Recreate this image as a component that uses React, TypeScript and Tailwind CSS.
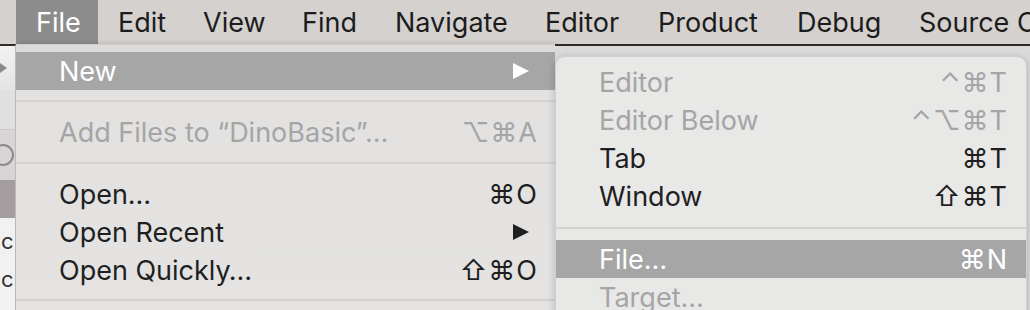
import React from "react";

const menus = [
  { label: "File", w: "w-[82px]", active: true },
  { label: "Edit", w: "w-[85px]" },
  { label: "View", w: "w-[99px]" },
  { label: "Find", w: "w-[93px]" },
  { label: "Navigate", w: "w-[150px]" },
  { label: "Editor", w: "w-[113px]" },
  { label: "Product", w: "w-[139px]" },
  { label: "Debug", w: "w-[122px]" },
  { label: "Source Control", w: "w-[160px]" },
];

const Arrow = ({ color }: { color: string }) => (
  <svg width="18" height="18" viewBox="0 0 18 18">
    <polygon points="1,1 17,9 1,17" fill={color} />
  </svg>
);

const Row = (props: {
  label: string;
  keys?: string;
  disabled?: boolean;
  active?: boolean;
  arrow?: boolean;
  h?: string;
  right?: string;
}) => {
  const text = props.active
    ? "text-white"
    : props.disabled
    ? "text-[#a5a5a5]"
    : "text-[#1f1f1f]";
  return (
    <div
      className={`flex items-center pl-[43px] ${props.right ?? "pr-[17px]"} ${
        props.h ?? "h-[38px]"
      } ${props.active ? "bg-[#a6a6a6]" : ""} ${text}`}
    >
      <span>{props.label}</span>
      <span className="ml-auto flex items-center">
        {props.arrow ? (
          <span className="pr-[8px]">
            <Arrow color={props.active ? "#ffffff" : "#1f1f1f"} />
          </span>
        ) : (
          <span className="tracking-[1px]">{props.keys}</span>
        )}
      </span>
    </div>
  );
};

const Sep = ({ top, bottom }: { top: string; bottom: string }) => (
  <div className={`${top} ${bottom} h-[2px] bg-[#d3d2d1]`}></div>
);

export default function App() {
  return (
    <div className="w-[1030px] h-[310px] overflow-hidden bg-[#d6d6d6] font-['Inter','DejaVu_Sans',sans-serif] text-[27px] leading-none">
      <div className="flex h-[44px] bg-[#d4d1cf] pl-[16px] text-[#1c1c1c] whitespace-nowrap">
        {menus.map((m) => (
          <div
            key={m.label}
            className={`${m.w} shrink-0 h-full flex items-center pl-[20px] ${
              m.active ? "bg-[#8c8c8c] text-white" : ""
            }`}
          >
            {m.label}
          </div>
        ))}
      </div>

      <div className="flex h-[266px]">
        <div className="w-[16px] shrink-0 border-t-2 border-[#2c2c2c] flex flex-col border-r border-r-[#bdbdbd] overflow-hidden">
          <div className="h-[44px] bg-gradient-to-b from-[#f2f2f2] to-[#e4e4e4] flex items-center">
            <svg width="8" height="12" viewBox="0 0 8 12">
              <polygon points="0,1 7,6 0,11" fill="#8a8a8a" />
            </svg>
          </div>
          <div className="h-[40px] bg-[#e0e0e0] border-b border-[#c8c8c8]"></div>
          <div className="h-[50px] bg-[#d9d5d5] flex items-center">
            <div className="w-[22px] h-[22px] rounded-full border-2 border-[#8a8a8a] -ml-[8px]"></div>
          </div>
          <div className="h-[38px] bg-[#a39d9e]"></div>
          <div className="flex-1 bg-[#f1f1f1] text-[22px] text-[#333] pl-[1px] pt-[12px]">
            <div className="h-[38px]">c</div>
            <div>c</div>
          </div>
        </div>

        <div className="w-[539px] shrink-0 bg-gradient-to-b from-[#e2e1e0] to-[#e4e3e2] shadow-[3px_0_5px_rgba(0,0,0,0.18)] whitespace-nowrap">
          <div className="h-[8px] bg-[#dcdbda] border-t border-[#cfcfcf]"></div>
          <Row label="New" active arrow />
          <Sep top="mt-[10px]" bottom="mb-[11px]" />
          <Row label="Add Files to “DinoBasic”…" keys="⌥⌘A" disabled h="h-[39px]" />
          <Sep top="mt-[10px]" bottom="mb-[11px]" />
          <Row label="Open…" keys="⌘O" />
          <Row label="Open Recent" arrow />
          <Row label="Open Quickly…" keys="⇧⌘O" />
          <Sep top="mt-[10px]" bottom="mb-[11px]" />
        </div>

        <div className="flex-1 border-t-2 border-[#2c2c2c] bg-[#dadada] pr-[3px]">
          <div className="h-[10px]"></div>
          <div className="bg-[#e8e8e7] rounded-t-[10px] border border-[#cfcfcf] shadow-[0_2px_8px_rgba(0,0,0,0.2)] pt-[6px] h-[270px] whitespace-nowrap">
            <Row label="Editor" keys="⌃⌘T" disabled right="pr-[18px]" />
            <Row label="Editor Below" keys="⌃⌥⌘T" disabled right="pr-[18px]" />
            <Row label="Tab" keys="⌘T" right="pr-[18px]" />
            <Row label="Window" keys="⇧⌘T" right="pr-[18px]" />
            <Sep top="mt-[12px]" bottom="mb-[11px]" />
            <Row label="File…" keys="⌘N" active right="pr-[18px]" />
            <Row label="Target…" disabled right="pr-[18px]" />
          </div>
        </div>
      </div>
    </div>
  );
}
